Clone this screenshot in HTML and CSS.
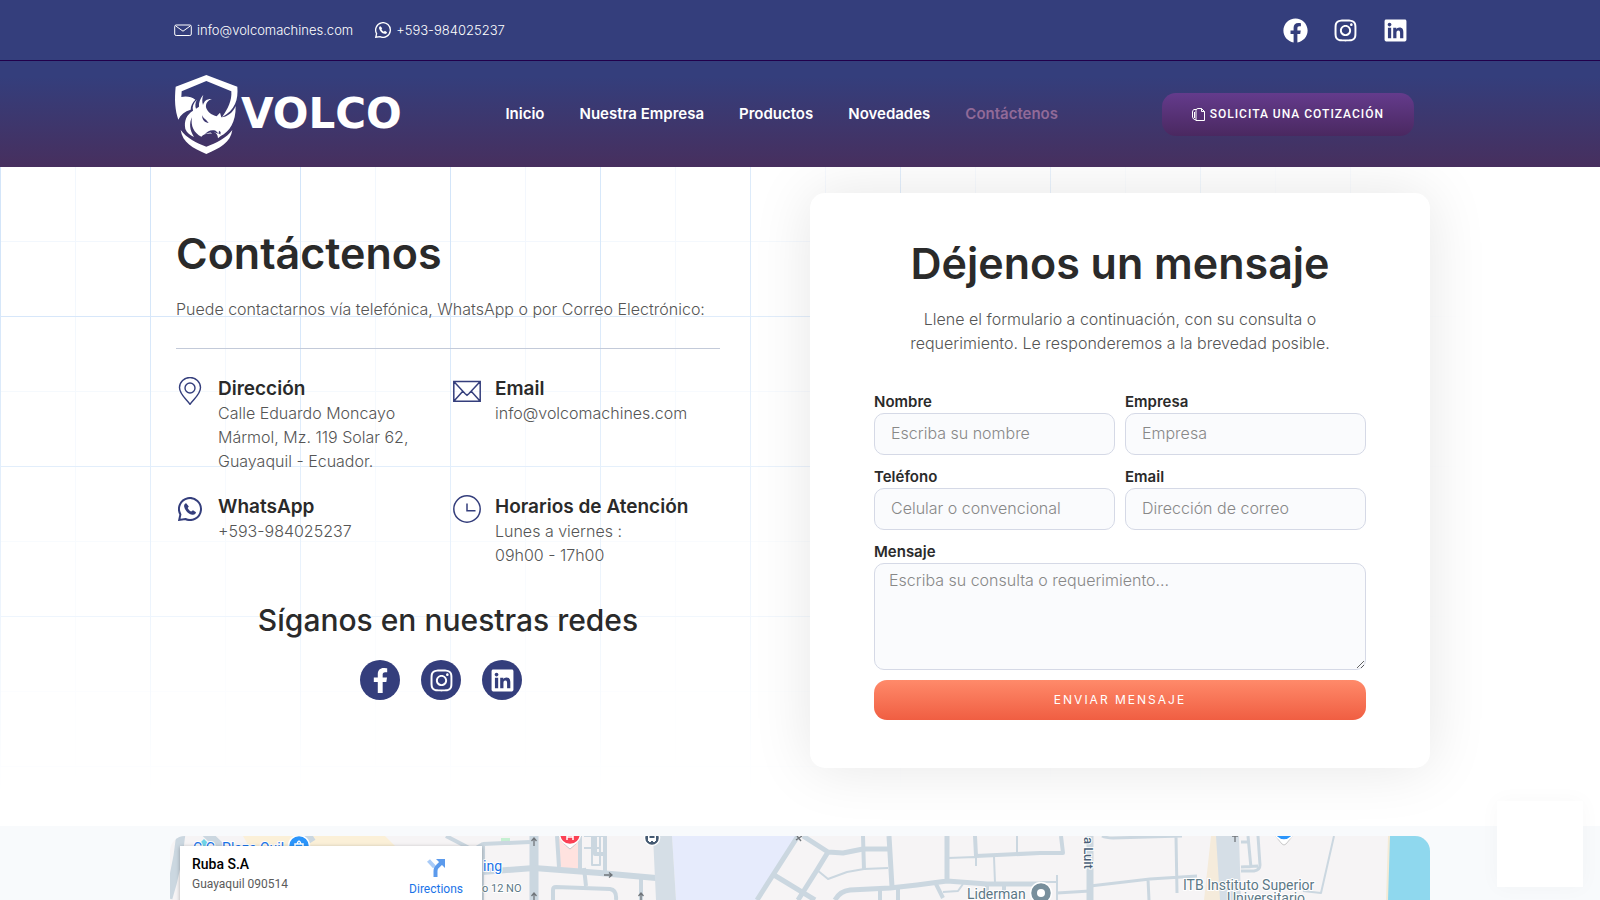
FILE: index.html
```html
<!DOCTYPE html>
<html lang="es">
<head>
<meta charset="utf-8">
<meta name="viewport" content="width=device-width, initial-scale=1">
<title>Contáctenos - Volco</title>
<link rel="stylesheet" href="styles.css">
</head>
<body>
<svg class="sprite" aria-hidden="true">
  <symbol id="i-facebook" viewBox="0 0 512 512"><path d="M504 256C504 119 393 8 256 8S8 119 8 256c0 123.780 90.690 226.380 209.250 245V327.690h-63V256h63v-54.640c0-62.150 37-96.480 93.670-96.480 27.140 0 55.520 4.840 55.520 4.840v61h-31.280c-30.800 0-40.410 19.120-40.410 38.730V256h68.780l-11 71.690h-57.780V501C413.310 482.380 504 379.780 504 256z"/></symbol>
  <symbol id="i-facebook-f" viewBox="0 0 320 512"><path d="M279.140 288l14.220-92.660h-88.910v-60.130c0-25.350 12.420-50.060 52.240-50.060h40.420V6.260S260.430 0 225.360 0c-73.220 0-121.080 44.380-121.080 124.720v70.620H22.890V288h81.390v224h100.170V288z"/></symbol>
  <symbol id="i-instagram" viewBox="0 0 448 512"><path d="M224.100 141c-63.600 0-114.900 51.300-114.900 114.900s51.300 114.900 114.900 114.900S339 319.500 339 255.900 287.700 141 224.100 141zm0 189.600c-41.100 0-74.700-33.500-74.700-74.700s33.500-74.700 74.700-74.700 74.700 33.500 74.700 74.700-33.600 74.700-74.700 74.700zm146.400-194.300c0 14.900-12 26.800-26.800 26.800-14.900 0-26.800-12-26.800-26.800s12-26.800 26.800-26.800 26.800 12 26.800 26.800zm76.100 27.200c-1.700-35.900-9.900-67.700-36.200-93.900-26.200-26.200-58-34.400-93.900-36.200-37-2.100-147.900-2.100-184.900 0-35.800 1.700-67.600 9.900-93.900 36.100s-34.400 58-36.200 93.900c-2.100 37-2.100 147.900 0 184.900 1.700 35.900 9.900 67.700 36.200 93.900s58 34.400 93.900 36.200c37 2.100 147.900 2.100 184.900 0 35.900-1.700 67.700-9.900 93.900-36.200 26.200-26.200 34.400-58 36.200-93.900 2.100-37 2.100-147.800 0-184.800zM398.800 388c-7.800 19.600-22.900 34.700-42.600 42.600-29.500 11.700-99.500 9-132.100 9s-102.700 2.600-132.100-9c-19.600-7.800-34.700-22.900-42.600-42.600-11.700-29.500-9-99.500-9-132.100s-2.600-102.700 9-132.100c7.800-19.600 22.900-34.700 42.600-42.600 29.500-11.700 99.500-9 132.100-9s102.700-2.600 132.100 9c19.600 7.800 34.700 22.900 42.600 42.600 11.700 29.500 9 99.500 9 132.100s2.700 102.700-9 132.100z"/></symbol>
  <symbol id="i-linkedin" viewBox="0 0 448 512"><path d="M416 32H31.900C14.300 32 0 46.500 0 64.300v383.400C0 465.500 14.300 480 31.900 480H416c17.600 0 32-14.500 32-32.300V64.300c0-17.800-14.400-32.300-32-32.300zM135.400 416H69V202.200h66.500V416zm-33.200-243c-21.300 0-38.500-17.300-38.500-38.500S80.900 96 102.200 96c21.200 0 38.500 17.300 38.500 38.500 0 21.300-17.200 38.500-38.500 38.500zm282.100 243h-66.400V312c0-24.800-.5-56.700-34.500-56.700-34.600 0-39.900 27-39.900 54.900V416h-66.400V202.200h63.700v29.200h.9c8.900-16.800 30.600-34.500 62.900-34.500 67.200 0 79.700 44.300 79.700 101.900V416z"/></symbol>
  <symbol id="i-whatsapp" viewBox="0 0 24 24"><path fill="none" stroke="currentColor" stroke-width="2" d="M1.200 22.900 2.400 17.400A11 11 0 1 1 7.400 22z"/><path d="M8.200 6.200c-1.700.3-2.400 1.900-2 3.600.9 3.700 4.200 7.300 8.200 8 2 .3 3.400-.8 3.600-2.500l-3-2.100-1.800 1.400c-1.700-.8-2.800-2.100-3.500-3.600l1.100-1.600z"/></symbol>
</svg>

<div class="topbar">
  <div class="container topbar-row">
    <a class="top-link" href="mailto:info@volcomachines.com">
      <svg class="icon-18" viewBox="0 0 18 18" fill="none" stroke="currentColor"><rect x=".7" y="4" width="16.600" height="10.500" rx="1.500"/><path d="M1.500 4.800 9 10.200l7.500-5.400"/></svg>
      info@volcomachines.com</a>
    <a class="top-link" href="tel:+593984025237"><svg class="icon-16" fill="currentColor"><use href="#i-whatsapp"/></svg>+593-984025237</a>
    <div class="top-social">
      <a href="#" aria-label="Facebook"><svg class="icon-25"><use href="#i-facebook"/></svg></a>
      <a href="#" aria-label="Instagram"><svg class="icon-25"><use href="#i-instagram"/></svg></a>
      <a href="#" aria-label="LinkedIn"><svg class="icon-25"><use href="#i-linkedin"/></svg></a>
    </div>
  </div>
</div>

<header class="header">
  <div class="container header-row">
    <a class="logo" href="#">
      <svg class="logo-mark" viewBox="70 222 195 243" fill="currentColor" aria-hidden="true">
        <path d="M167 225 260 260C263 300 254 328 214 352 232 326 244 302 242 274L167 243 93 274 92 291C108 287 123 291 134 299 125 308 120 318 120 329 102 334 90 344 83 359 73 330 71 300 75 260Z"/>
        <path d="M158 284C148 297 144 306 145 320L136 326C133 318 133 308 139 299 128 308 124 320 127 332 108 344 99 362 104 387 109 399 118 406 130 411 117 390 115 370 124 352 119 377 130 400 152 410 158 402 174 399 184 401L176 393C192 393 202 402 202 415L210 408C236 395 256 367 255 318 247 337 232 350 212 352L208 338 198 349C184 346 170 336 166 322 165 310 171 301 184 297 169 296 161 302 157 315 154 305 154 295 158 284Z"/>
        <path d="M90 390C107 414 138 429 167 440 196 429 228 414 245 390 240 427 207 445 167 462 127 445 95 427 90 390Z"/>
        <path class="logo-cut" d="M154 345c3 10 12 12 20 24-11-1-20-9-20-24zM161 405c8-12 21-17 34-13l10 10c-14-7-29-8-44 3zM205 392l5 4-1 8-5-4z"/>
      </svg>
      <span class="logo-text">VOLCO</span>
    </a>
    <nav class="nav">
      <a href="#">Inicio</a>
      <a href="#">Nuestra Empresa</a>
      <a href="#">Productos</a>
      <a href="#">Novedades</a>
      <a href="#" class="active">Contáctenos</a>
    </nav>
    <a class="quote" href="#">
      <svg class="icon-13" viewBox="0 0 13 13" fill="none" stroke="currentColor"><path d="M4 12.500V2.500Q4 .5 6 .5H9.500L12.500 3.500V12.500H4M9.500.5V3.500H12.500M4 1.500H2Q.5 2 .5 4V9Q.8 11.500 4 12M2.500 4V10"/></svg>
      SOLICITA UNA COTIZACIÓN</a>
  </div>
</header>

<main class="main">
  <div class="container main-row">
    <section class="contact">
      <h1 class="title">Contáctenos</h1>
      <p class="lead">Puede contactarnos vía telefónica, WhatsApp o por Correo Electrónico:</p>
      <hr class="rule">
      <div class="details">
        <div class="detail">
          <svg class="icon-28" viewBox="0 0 28 28" fill="none" stroke="currentColor" stroke-width="1.400"><path d="M14 27.300C10.500 22 3.500 17.500 3.500 10.500a10.500 10 0 0 1 21 0C24.500 17.500 17.500 22 14 27.300z"/><circle cx="14" cy="11" r="5"/></svg>
          <div><h2>Dirección</h2><p>Calle Eduardo Moncayo<br>Mármol, Mz. 119 Solar 62,<br>Guayaquil - Ecuador.</p></div>
        </div>
        <div class="detail">
          <svg class="icon-28" viewBox="0 0 28 28" fill="none" stroke="currentColor" stroke-width="1.500"><path d="M.8 4.500H27.200V24.200H.8zM.8 4.500 12.200 16.800 14 18.200 15.800 16.800 27.200 4.500M.8 24.200 9.800 14.300M27.200 24.200 18.200 14.300"/></svg>
          <div><h2>Email</h2><p>info@volcomachines.com</p></div>
        </div>
        <div class="detail">
          <svg class="icon-28 wa" fill="currentColor"><use href="#i-whatsapp"/></svg>
          <div><h2>WhatsApp</h2><p>+593-984025237</p></div>
        </div>
        <div class="detail">
          <svg class="icon-28" viewBox="0 0 28 28" fill="none" stroke="currentColor" stroke-width="1.500"><circle cx="14" cy="14" r="13.200"/><path d="M14 8.500V15.800H22.500"/></svg>
          <div><h2>Horarios de Atención</h2><p>Lunes a viernes :<br>09h00 - 17h00</p></div>
        </div>
      </div>
      <h2 class="subtitle">Síganos en nuestras redes</h2>
      <div class="social">
        <a href="#" aria-label="Facebook"><svg class="icon-25"><use href="#i-facebook-f"/></svg></a>
        <a href="#" aria-label="Instagram"><svg class="icon-25"><use href="#i-instagram"/></svg></a>
        <a href="#" aria-label="LinkedIn"><svg class="icon-25"><use href="#i-linkedin"/></svg></a>
      </div>
    </section>

    <section class="card">
      <h2 class="title">Déjenos un mensaje</h2>
      <p class="lead">Llene el formulario a continuación, con su consulta o<br>requerimiento. Le responderemos a la brevedad posible.</p>
      <form class="form">
        <div class="field"><label for="nombre">Nombre</label><input id="nombre" type="text" placeholder="Escriba su nombre"></div>
        <div class="field"><label for="empresa">Empresa</label><input id="empresa" type="text" placeholder="Empresa"></div>
        <div class="field"><label for="tel">Teléfono</label><input id="tel" type="tel" placeholder="Celular o convencional"></div>
        <div class="field"><label for="email">Email</label><input id="email" type="email" placeholder="Dirección de correo"></div>
        <div class="field wide"><label for="msg">Mensaje</label><textarea id="msg" placeholder="Escriba su consulta o requerimiento..."></textarea></div>
        <button class="send wide" type="button">ENVIAR MENSAJE</button>
      </form>
    </section>
  </div>
</main>

<section class="map-band">
  <div class="container map">
    <svg class="map-art" viewBox="0 0 1260 64" preserveAspectRatio="xMinYMin slice" role="img" aria-label="Mapa">
      <rect width="1260" height="64" fill="#f6f4f5"/>
      <path fill="#fbf0d8" d="M73 0H215L245 30H90z"/>
      <path fill="#ffe2df" d="M388 0H410V34L389 31z"/>
      <path fill="#e6ebfc" d="M502 0H627L587 64H506z"/>
      <path fill="#c5f0d2" d="M331 2H340V9H331z"/>
      <path fill="#6fd3e8" d="M34 3l5 5-5 3-4-4z"/>
      <g fill="none" stroke="#cbd7e0" stroke-linejoin="round">
        <path stroke-width="9" d="M11-4Q8 30-2 62M35-4 58 18M143 0 115 18M364 0V64"/>
        <path stroke-width="6" d="M312 36 364 32 430 37 486 42"/>
        <path stroke-width="4" d="M276 0 303 14 313 8V34M313 8 360 6M387 0 389 31M410 0V34M425 0V18H434M435 0V38M383 64V54Q383 51 386 51L440 53Q447 54 446 64M414 32 416 50M471 43V64"/>
        <path stroke-width="2" d="M313 38V64M422 0V29H430V0M414 12H430M414 0H434"/>
        <path stroke-width="5" d="M628 0 587 64M633 0 658 16 673 17 693 13H718M658 16 647 34 628 64M604 39 645 64M665 64Q670 55 680 54L720 52 747 49 777 45 817 48H870M777 0V44M719 0 722 51"/>
        <path stroke-width="4" d="M693 0 694 34M805 0 806 20 870 17 893 17 891 0M710 53V64M728 53V64M766 48 773 62M817 48V58M834 48V58"/>
        <path stroke-width="2" d="M628 64 632 54M647 34 658 43 677 36 694 33 718 32M806 20V30M778 22 805 21M847 0V17M824 21 825 47M773 56 788 55 793 48M887 39V64M870 46H887"/>
        <path stroke-width="7" d="M920 0V64"/>
        <path stroke-width="3" d="M932 0Q936 2 943 2L1012 0M1006 0 1007 57M920 50 980 43 1027 40M978 43 979 64M887 57 920 55M1078 0 1081 32M1088 0 1090 29Q1090 34 1084 35L1071 35M1071 6H1078M1071 31 1088 30"/>
        <path stroke-width="2" d="M1164 0 1151 57 1133 55"/>
      </g>
      <path fill="#f5ebdb" d="M1041 0H1048L1052 64H1034z"/>
      <path fill="#d5dee6" d="M483 0H502L506 64H486zM1046 0H1069L1071 64H1050z"/>
      <path fill="#f3ead5" d="M1218 0H1222V64H1216z"/>
      <path fill="#8fd8ee" d="M1220 0H1260V64H1218z"/>
      <g fill="none" stroke="#70757a" stroke-width="1.300"><path d="M364 10V2M361.500 5 364 2 366.500 5M364 64V57M361.500 60 364 57 366.500 60M434 39H442M439 36.500 442 39 439 41.500M471 64V57M468.500 60 471 57 473.500 60M1065 6V-2M1062 0H1068M627 0 631 5M626 4 632 0"/></g>
      <g class="poi-blue"><text x="23" y="17" font-size="14">C.C. Plaza Quil</text><text x="313" y="35" font-size="14">ing</text></g>
      <g class="poi-grey"><text x="312" y="56" font-size="11">o 12 NO</text><text x="797" y="63" font-size="14">Liderman</text><text x="1013" y="54" font-size="14">ITB Instituto Superior</text><text x="1057" y="67" font-size="14">Universitario</text></g>
      <text class="street" transform="translate(914 1) rotate(90)" font-size="13">a Luit</text>
      <g stroke="#fff" stroke-width="1.500">
        <circle cx="129" cy="10" r="10.500" fill="#2b95fb"/>
        <path fill="#fff" stroke="#bbb" stroke-width=".8" d="M388-4Q390 6 400 13 410 6 412-4zM1102-4 1112 8Q1114 10 1116 8L1126-4z"/>
        <circle cx="400" cy="-2" r="10.500" fill="#fb4154"/>
        <circle cx="1114" cy="-6" r="10" fill="#2b95fb"/>
        <circle cx="482" cy="2" r="7.500" fill="#455a72"/>
        <circle cx="871" cy="57" r="10.500" fill="#788f9c"/>
      </g>
      <path fill="none" stroke="#fff" stroke-width="1.500" d="M125 8H133V14H125zM127 8Q129 2 131 8M397-2V4M403-2V4M397 1H403"/>
      <path fill="#fff" fill-rule="evenodd" d="M478-2H486V5H485V6H483V5H481V6H479V5H478zM479.500-1V2H484.500V-1z"/>
      <circle cx="871" cy="57" r="4" fill="#fff"/>
    </svg>
    <div class="place">
      <div><strong>Ruba S.A</strong><span>Guayaquil 090514</span></div>
      <a href="#"><svg class="icon-20" viewBox="0 0 20 20" fill="none" stroke-width="4"><path stroke="#a9cbf7" d="M2.500 2.500 8.500 9"/><path stroke="#5b9aec" d="M9.500 19V13Q9.500 10 11.500 8.500L15 5"/><path fill="#5b9aec" d="M10 1H19V10z"/></svg>Directions</a>
    </div>
  </div>
</section>
<div class="widget"></div>
</body>
</html>
```
FILE: styles.css
```css
* { box-sizing: border-box; }
body {
  margin: 0;
  min-height: 100vh;
  display: flex;
  flex-direction: column;
  font: 300 16px/24px Inter, "Open Sans", sans-serif;
  color: #555;
  background: #fff;
}
h1, h2, p { margin: 0; }
a { color: inherit; text-decoration: none; }
.sprite { display: none; }
.container { width: 100%; max-width: 1260px; margin: 0 auto; }
.icon-13 { width: 13px; height: 13px; }
.icon-16 { width: 16px; height: 16px; overflow: visible; }
.icon-18 { width: 18px; height: 18px; }
.icon-20 { width: 20px; height: 20px; }
.icon-25 { width: 25px; height: 25px; fill: #fff; display: block; }
.icon-28 { width: 28px; height: 28px; flex: none; color: #343e7c; }
.icon-28.wa { padding: 2px; overflow: visible; }

.topbar { background: #343e7c; color: #fff; border-bottom: 1px solid #21004b; }
.topbar-row { display: flex; align-items: center; gap: 22px; height: 60px; padding: 0 22px 0 4px; font-size: 13px; }
.top-link { display: flex; align-items: center; gap: 5px; }
.top-social { display: flex; gap: 25px; margin-left: auto; }

.header { background: linear-gradient(#343e7c 15%, #472f5e); color: #fff; }
.header-row { display: flex; align-items: center; justify-content: space-between; height: 106px; padding: 0 16px 0 4px; }
.logo { display: flex; align-items: center; gap: 2px; }
.logo-mark { width: 65px; height: 81px; }
.logo-cut { fill: #3d3770; }
.logo-text { font: 700 42px/48px "DejaVu Sans", sans-serif; }
.nav { display: flex; gap: 35px; font-size: 15px; font-weight: 600; }
.nav .active { color: #916a98; }
.quote {
  display: flex; align-items: center; gap: 5px;
  height: 43px; padding: 0 30px;
  border-radius: 14px;
  background: linear-gradient(#643b8c, #4a2860);
  font: 500 12px/20px Roboto, sans-serif; letter-spacing: 1px; white-space: nowrap;
}

.main { position: relative; padding: 26px 0 58px; overflow: hidden; }
.main::before {
  content: "";
  position: absolute;
  inset: 0;
  background:
    linear-gradient(90deg, #d3e5f9 1px, transparent 1px) 0 0 / 150px 150px,
    linear-gradient(#d3e5f9 1px, transparent 1px) 0 -1px / 150px 150px,
    linear-gradient(90deg, #f2f7fd 1px, transparent 1px) 75px 0 / 150px 150px,
    linear-gradient(#f2f7fd 1px, transparent 1px) 0 74px / 150px 150px;
  mask-image:
    linear-gradient(90deg, #000 30%, rgba(0, 0, 0, .6) 60%, transparent 92%),
    linear-gradient(#000 15%, rgba(0, 0, 0, .5) 60%, transparent 95%);
  mask-composite: intersect;
}
.main-row { position: relative; display: grid; grid-template-columns: 550px 620px; justify-content: space-between; }
.title { font-size: 43px; line-height: 48px; font-weight: 600; color: #2a2a2a; }
.contact { padding: 36px 0 0 6px; }
.lead { margin-top: 20px; }
.rule { margin: 27px 0 28px; border: 0; border-top: 1px solid #c3cad9; }
.details { display: grid; grid-template-columns: 277px 1fr; row-gap: 22px; }
.detail { display: flex; gap: 14px; }
.detail h2 { font-size: 19px; line-height: 24px; font-weight: 600; color: #2a2a2a; }
.subtitle { margin-top: 35px; font-size: 30px; line-height: 36px; font-weight: 500; text-align: center; color: #2a2a2a; }
.social { display: flex; justify-content: center; gap: 21px; margin: 22px 14px 0 0; }
.social a { display: grid; place-items: center; width: 40px; height: 40px; border-radius: 50%; background: #343e7c; }

.card { padding: 46px 64px 48px; border-radius: 15px; background: #fff; box-shadow: 0 0 60px rgba(0, 0, 0, .1); }
.card .title, .card .lead { text-align: center; }
.card .lead { white-space: nowrap; }
.form { display: grid; grid-template-columns: 1fr 1fr; gap: 10px; margin-top: 35px; }
.wide { grid-column: 1 / -1; }
.field { display: flex; flex-direction: column; }
.field label { font-size: 15px; line-height: 23px; font-weight: 600; color: #2a2a2a; }
.field input, .field textarea {
  width: 100%; border: 1px solid #d5d9e6; border-radius: 10px;
  background: #fafbfd; color: #555; font: inherit;
}
.field input { height: 42px; padding: 0 16px 2px; }
.field textarea { display: block; height: 107px; padding: 4px 14px; resize: vertical; }
.field ::placeholder { color: #888; opacity: 1; }
.send {
  height: 40px; border: 0; border-radius: 13px;
  background: linear-gradient(#ff8a6a, #f05e42);
  color: #fff; font: 400 12px/20px Inter, sans-serif; letter-spacing: 2px;
}

.map-band { flex: 1; display: flex; padding-top: 10px; background: #f8fafc; }
.map { position: relative; min-height: 64px; border-radius: 15px 15px 0 0; overflow: hidden; }
.map-art { position: absolute; inset: 0; width: 100%; height: 100%; font-family: Roboto, sans-serif; font-weight: 400; }
.map-art text { paint-order: stroke; stroke: #fff; stroke-width: 2px; }
.poi-blue { fill: #1a73e8; }
.poi-grey { fill: #5c7886; }
.street { fill: #4a5f78; font-weight: 500; }
.place {
  position: absolute; left: 10px; top: 10px; width: 302px; height: 84px;
  display: flex; justify-content: space-between; padding: 8px 19px 0 12px;
  background: #fff; box-shadow: 0 1px 4px rgba(0, 0, 0, .3);
  font: 400 12px/20px Roboto, sans-serif;
}
.place strong { display: block; font-size: 14px; font-weight: 500; color: #000; }
.place span { color: #5b5b5b; }
.place a { display: flex; flex-direction: column; align-items: center; gap: 1px; padding-top: 4px; color: #1a73e8; }
.widget { position: fixed; right: 17px; bottom: 13px; width: 86px; height: 86px; background: #fff; box-shadow: 0 0 20px rgba(0, 0, 0, .03); }
```
